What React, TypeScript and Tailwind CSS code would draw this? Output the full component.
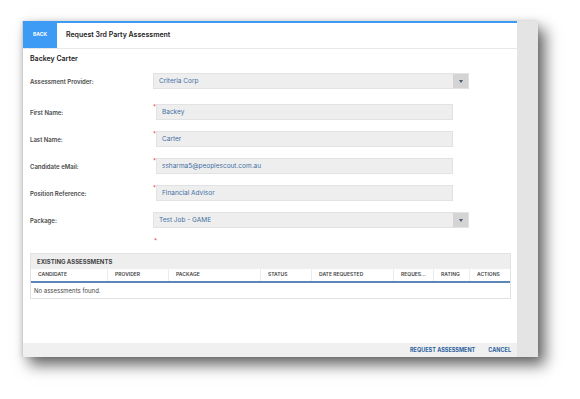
const fields = [
  { label: "First Name:", value: "Backey" },
  { label: "Last Name:", value: "Carter" },
  { label: "Candidate eMail:", value: "ssharma5@peoplescout.com.au" },
  { label: "Position Reference:", value: "Financial Advisor" },
];

const columns = [
  { name: "CANDIDATE", w: "w-[77px]" },
  { name: "PROVIDER", w: "w-[61px]" },
  { name: "PACKAGE", w: "w-[92px]" },
  { name: "STATUS", w: "w-[51px]" },
  { name: "DATE REQUESTED", w: "w-[82px]" },
  { name: "REQUES...", w: "w-[40px]" },
  { name: "RATING", w: "w-[36px]" },
  { name: "ACTIONS", w: "flex-1" },
];

const Label = ({ children }: { children: string }) => (
  <div className="w-[123px] shrink-0 text-[6px] font-semibold text-[#4a4a4a]">{children}</div>
);

const SelectBox = ({ value }: { value: string }) => (
  <div className="w-[316px] h-[16px] flex bg-[#eeeeee] border border-[#e2e2e2]">
    <div className="flex-1 flex items-center pl-[5px] pt-[1px] text-[6.5px] leading-none text-[#3f6fa3]">{value}</div>
    <div className="w-[15px] bg-[#d4d4d4] flex items-center justify-center">
      <svg width="4" height="3" viewBox="0 0 4 3">
        <path d="M0 0h4L2 3z" fill="#4a5a6a" />
      </svg>
    </div>
  </div>
);

const App = () => {
  return (
    <div
      className="w-[580px] h-[399px] bg-white pt-[21px] pl-[22px]"
      style={{ fontFamily: "Inter, 'Liberation Sans', sans-serif" }}
    >
      <div className="w-[516px] h-[336px] flex border-l border-[#cfcfcf] shadow-[0_0_5px_rgba(0,0,0,0.12),7px_8px_14px_rgba(0,0,0,0.6)]">
        <div className="w-[494px] flex flex-col bg-white">
          <div className="h-[28px] flex border-t-2 border-[#3d9bf5] border-b border-b-[#e8e8e8]">
            <div className="w-[34px] -mt-[2px] bg-[#3d9bf5] flex items-center justify-center text-white text-[5px] font-bold">
              BACK
            </div>
            <div className="flex items-center pl-[9px] text-[7px] font-semibold text-[#222]">
              Request 3rd Party Assessment
            </div>
          </div>

          <div className="flex-1 flex flex-col px-[7px] pr-[6px]">
            <div className="h-[20px] flex items-center text-[7px] font-semibold text-[#222]">
              Backey Carter
            </div>
            <div className="mt-[4px] flex items-center">
              <Label>Assessment Provider:</Label>
              <SelectBox value="Criteria Corp" />
            </div>
            {fields.map((f, i) => (
              <div key={f.label} className={`${i === 0 ? "mt-[15px]" : "mt-[11px]"} flex items-center`}>
                <Label>{f.label}</Label>
                <div className="w-[3px] self-start text-[6px] leading-[6px] text-[#e03030]">*</div>
                <div className="w-[297px] h-[16px] flex items-center pl-[5px] pt-[1px] bg-[#eeeeee] border border-[#e2e2e2] text-[6.5px] leading-none text-[#3f6fa3]">
                  {f.value}
                </div>
              </div>
            ))}
            <div className="mt-[11px] flex items-center">
              <Label>Package:</Label>
              <SelectBox value="Test Job - GAME" />
            </div>
            <div className="mt-[10px] h-[6px] pl-[124px] text-[6px] leading-[6px] text-[#e03030]">*</div>

            <div className="mt-[9px] border border-[#e2e2e2]">
              <div className="h-[15px] flex items-center pl-[6px] bg-[#eeeeee] text-[6px] font-bold text-[#444]">
                EXISTING ASSESSMENTS
              </div>
              <div className="h-[14px] flex border-b-2 border-[#5b87b6]">
                {columns.map((c, i) => (
                  <div
                    key={c.name}
                    className={`${c.w} flex items-center pl-[7px] text-[5px] font-semibold text-[#444] ${i < columns.length - 1 ? "border-r border-[#ececec]" : ""}`}
                  >
                    {c.name}
                  </div>
                ))}
              </div>
              <div className="h-[15px] flex items-center pl-[3px] text-[6px] text-[#444]">
                No assessments found.
              </div>
            </div>
          </div>

          <div className="h-[14px] bg-[#f0f0f0] flex items-center justify-end gap-[13px] pr-[6px] text-[5.5px] font-bold text-[#2c5f9e]">
            <span>REQUEST ASSESSMENT</span>
            <span>CANCEL</span>
          </div>
        </div>
        <div className="w-[21px] bg-[#e4e4e4]" />
      </div>
    </div>
  );
};

export default App;
